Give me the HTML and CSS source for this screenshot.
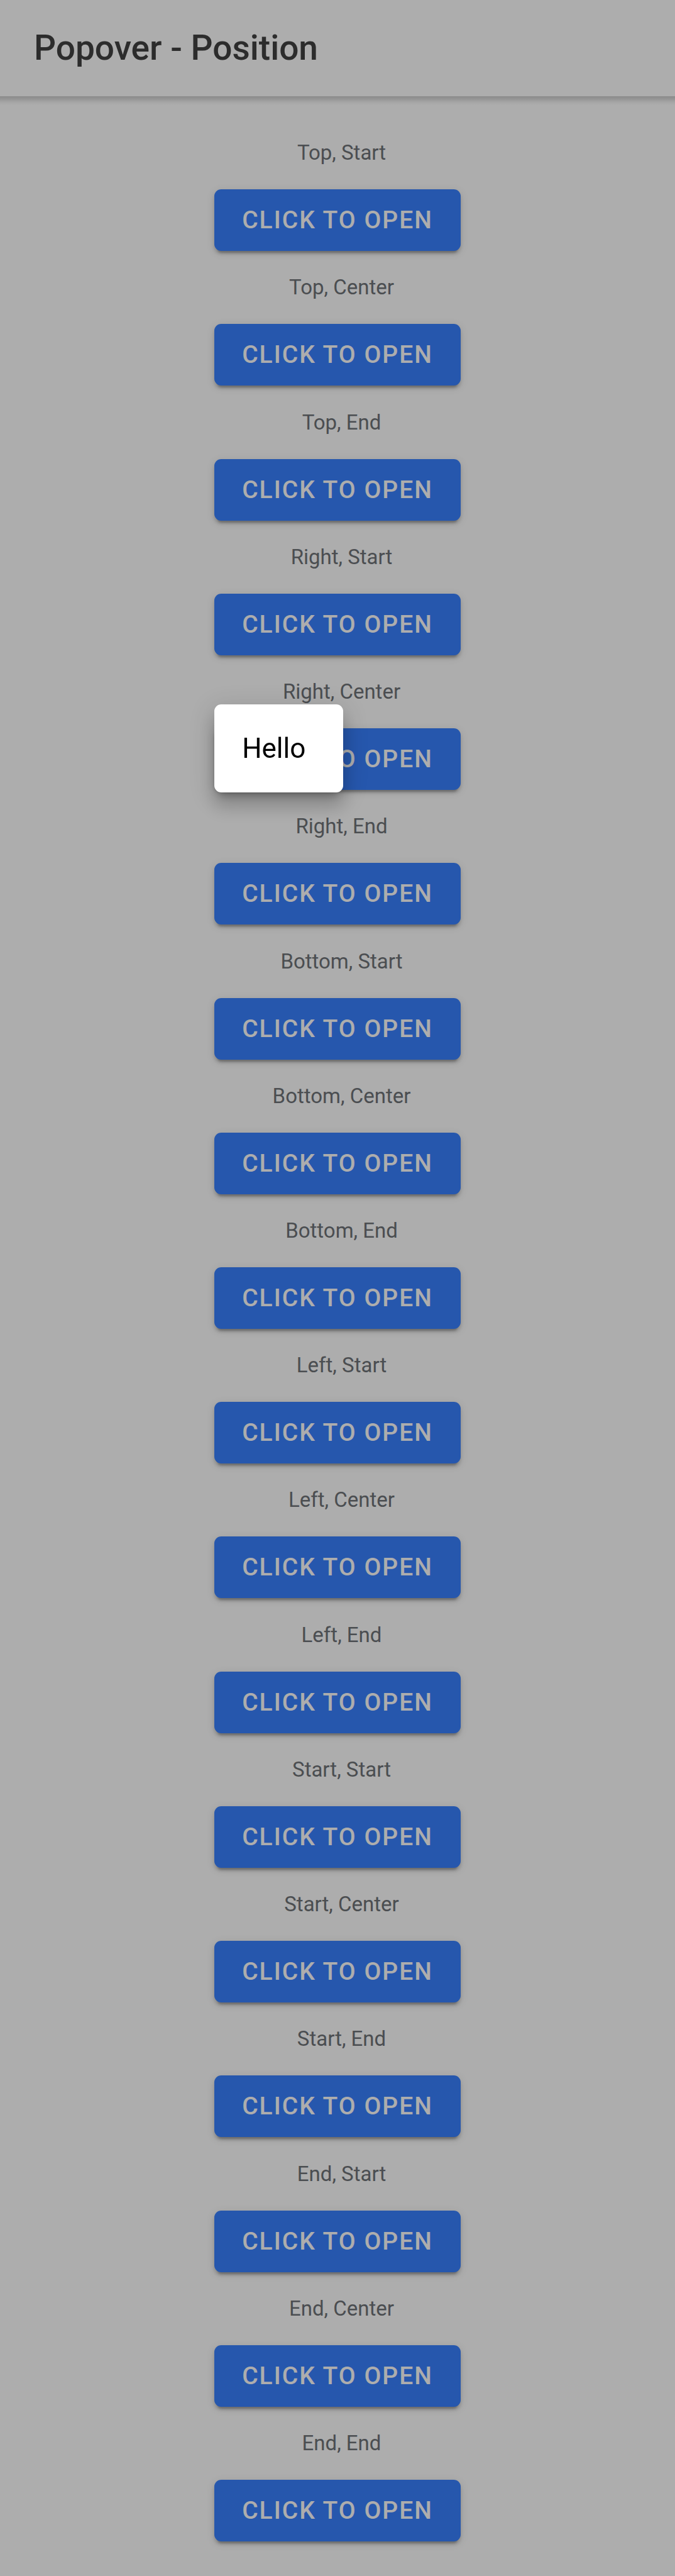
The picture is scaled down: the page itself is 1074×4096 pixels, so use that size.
FILE: index.html
```html
<!DOCTYPE html>
<html lang="en">
<head>
<meta charset="utf-8">
<meta name="viewport" content="width=device-width, initial-scale=1">
<title>Popover - Position</title>
<link rel="stylesheet" href="styles.css">
</head>
<body>
<header class="header"><h1 class="header-title">Popover - Position</h1></header>
<main class="grid">
<section class="cell"><h2 class="cell-label">Top, Start</h2><button class="button" type="button">Click to Open</button></section>
<section class="cell"><h2 class="cell-label">Top, Center</h2><button class="button" type="button">Click to Open</button></section>
<section class="cell"><h2 class="cell-label">Top, End</h2><button class="button" type="button">Click to Open</button></section>
<section class="cell"><h2 class="cell-label">Right, Start</h2><button class="button" type="button">Click to Open</button></section>
<section class="cell"><h2 class="cell-label">Right, Center</h2>
<div class="trigger"><button class="button" type="button">Click to Open</button><div class="popover" role="dialog" aria-label="Hello">Hello</div></div></section>
<section class="cell"><h2 class="cell-label">Right, End</h2><button class="button" type="button">Click to Open</button></section>
<section class="cell"><h2 class="cell-label">Bottom, Start</h2><button class="button" type="button">Click to Open</button></section>
<section class="cell"><h2 class="cell-label">Bottom, Center</h2><button class="button" type="button">Click to Open</button></section>
<section class="cell"><h2 class="cell-label">Bottom, End</h2><button class="button" type="button">Click to Open</button></section>
<section class="cell"><h2 class="cell-label">Left, Start</h2><button class="button" type="button">Click to Open</button></section>
<section class="cell"><h2 class="cell-label">Left, Center</h2><button class="button" type="button">Click to Open</button></section>
<section class="cell"><h2 class="cell-label">Left, End</h2><button class="button" type="button">Click to Open</button></section>
<section class="cell"><h2 class="cell-label">Start, Start</h2><button class="button" type="button">Click to Open</button></section>
<section class="cell"><h2 class="cell-label">Start, Center</h2><button class="button" type="button">Click to Open</button></section>
<section class="cell"><h2 class="cell-label">Start, End</h2><button class="button" type="button">Click to Open</button></section>
<section class="cell"><h2 class="cell-label">End, Start</h2><button class="button" type="button">Click to Open</button></section>
<section class="cell"><h2 class="cell-label">End, Center</h2><button class="button" type="button">Click to Open</button></section>
<section class="cell"><h2 class="cell-label">End, End</h2><button class="button" type="button">Click to Open</button></section>
</main>
<div class="backdrop"></div>
</body>
</html>
```
FILE: styles.css
```css
* { box-sizing: border-box; }

body {
  margin: 0;
  min-height: 100vh;
  display: flex;
  flex-direction: column;
  background: #fff;
  font-family: Roboto, "Liberation Sans", sans-serif;
}

.header {
  position: relative;
  padding: 44px 54px 45px;
}

/* soft edge under the toolbar */
.header::after {
  content: "";
  position: absolute;
  left: 0;
  right: 0;
  top: 100%;
  height: 14px;
  background: linear-gradient(rgba(0, 0, 0, .2), rgba(0, 0, 0, .14) 30%, rgba(0, 0, 0, .04) 70%, transparent);
}

.header-title {
  margin: 0;
  font-size: 55px;
  line-height: 64px;
  font-weight: 500;
  color: #424242;
}

.grid {
  flex: 1;
  display: grid;
  grid-auto-rows: 1fr;
  padding: 32px 44px 55px;
}

.cell {
  display: flex;
  flex-direction: column;
  align-items: center;
  justify-content: flex-end;
  gap: 38px;
}

.cell-label {
  margin: 0;
  padding-left: 13px;
  font-size: 33px;
  line-height: 40px;
  font-weight: 400;
  color: #6f7378;
}

.trigger { position: relative; }

.button {
  display: block;
  margin: 0;
  padding: 27px 44px;
  border: 0;
  border-radius: 11px;
  background: #3880ff;
  color: #fff;
  font-family: inherit;
  font-size: 39px;
  line-height: 44px;
  font-weight: 500;
  letter-spacing: 2px;
  text-transform: uppercase;
  white-space: nowrap;
  box-shadow: 0 8px 3px -5px rgba(0, 0, 0, .2), 0 5px 5px rgba(0, 0, 0, .14), 0 3px 14px rgba(0, 0, 0, .12);
}

.backdrop {
  position: fixed;
  inset: 0;
  z-index: 10;
  background: rgba(0, 0, 0, .32);
}

.popover {
  position: absolute;
  z-index: 20;
  left: 0;
  top: -38px;
  padding: 44px 60px 44px 44px;
  border-radius: 11px;
  background: #fff;
  color: #000;
  font-size: 44px;
  line-height: 52px;
  box-shadow: 0 14px 14px -8px rgba(0, 0, 0, .2), 0 22px 27px 3px rgba(0, 0, 0, .14), 0 8px 38px 5px rgba(0, 0, 0, .12);
}
```
